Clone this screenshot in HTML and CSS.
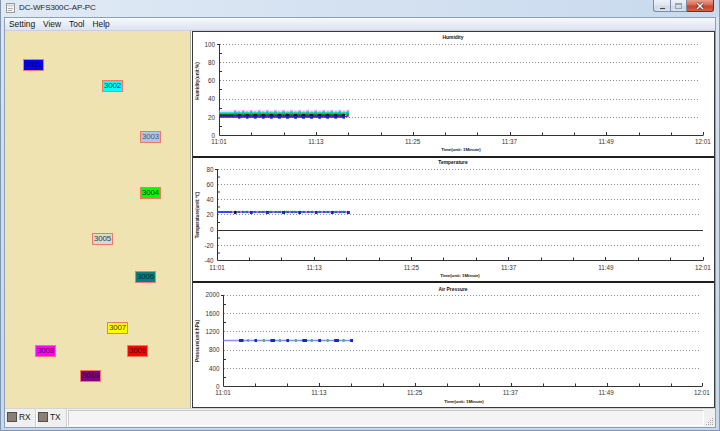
FILE: index.html
```html
<!DOCTYPE html>
<html lang="en">
<head>
<meta charset="utf-8">
<title>DC-WFS300C-AP-PC</title>
<link rel="stylesheet" href="styles.css">
</head>
<body>
<div class="window">
  <div class="titlebar">
    <svg class="app-icon" width="9" height="10" viewBox="0 0 9 10">
      <rect x="0.5" y="0.5" width="8" height="9" fill="#F4F4F4" stroke="#9A9A9A"/>
      <rect x="1.5" y="1.5" width="6" height="2" fill="#C8D4E2"/>
      <path d="M2 5.5h5M2 7.5h4" stroke="#B0B0B0"/>
    </svg>
    <span class="title">DC-WFS300C-AP-PC</span>
    <div class="caption">
      <div class="cbtn min">
        <svg width="15" height="10" viewBox="0 0 15 10"><rect x="4.5" y="6.5" width="6" height="2" fill="#4A4A4A" stroke="#fff" stroke-width="0.6"/></svg>
      </div>
      <div class="cbtn max">
        <svg width="15" height="10" viewBox="0 0 15 10"><rect x="4.5" y="2.5" width="6" height="5" fill="none" stroke="#9AA3AE"/><path d="M4.5 3.5h6" stroke="#9AA3AE"/></svg>
      </div>
      <div class="cbtn close">
        <svg width="24" height="10" viewBox="0 0 24 10"><path d="M9 2L15 8M15 2L9 8" stroke="#5A1E12" stroke-width="2.6"/><path d="M9 2L15 8M15 2L9 8" stroke="#fff" stroke-width="1.5"/></svg>
      </div>
    </div>
  </div>

  <div class="client">
    <div class="menubar">
      <span class="menu-item">Setting</span>
      <span class="menu-item">View</span>
      <span class="menu-item">Tool</span>
      <span class="menu-item">Help</span>
    </div>

    <div class="main">
      <div class="map">
        <div class="badge b1" style="left:18px;top:28px">3001</div>
        <div class="badge b2" style="left:97px;top:49px">3002</div>
        <div class="badge b3" style="left:135px;top:100px">3003</div>
        <div class="badge b4" style="left:135px;top:156px">3004</div>
        <div class="badge b5" style="left:87px;top:202px">3005</div>
        <div class="badge b6" style="left:130px;top:240px">3006</div>
        <div class="badge b7" style="left:102px;top:291px">3007</div>
        <div class="badge b8" style="left:30px;top:314px">3008</div>
        <div class="badge b9" style="left:122px;top:314px">3009</div>
        <div class="badge b10" style="left:75px;top:339px">3010</div>
      </div>
      <div class="splitter"></div>
      <div class="charts">
        <!-- Humidity -->
        <svg class="chart c1" width="521" height="124" viewBox="0 0 521 124">
          <defs>
            <marker id="mkSqBlue" markerUnits="userSpaceOnUse" markerWidth="3" markerHeight="3" refX="1.5" refY="1.5"><rect width="3" height="3" fill="#1428C8"/></marker>
            <marker id="mkSqGreen" markerUnits="userSpaceOnUse" markerWidth="3" markerHeight="3" refX="1.5" refY="1.5"><rect width="3" height="3" fill="#2EAA2E"/></marker>
            <marker id="mkSqBlack" markerUnits="userSpaceOnUse" markerWidth="3" markerHeight="3" refX="1.5" refY="1.5"><rect width="3" height="3" fill="#1A1A1A"/></marker>
            <marker id="mkSqCyan" markerUnits="userSpaceOnUse" markerWidth="3" markerHeight="3" refX="1.5" refY="1.5"><rect width="3" height="3" fill="#00C8D0"/></marker>
            <marker id="mkXPink" markerUnits="userSpaceOnUse" markerWidth="4" markerHeight="4" refX="2" refY="2"><path d="M0.8 0.8L3.2 3.2M3.2 0.8L0.8 3.2" stroke="#FF70FF" stroke-width="0.8"/></marker>
            <marker id="mkXGreen" markerUnits="userSpaceOnUse" markerWidth="4" markerHeight="4" refX="2" refY="2"><path d="M0.8 0.8L3.2 3.2M3.2 0.8L0.8 3.2" stroke="#22C822" stroke-width="0.8"/></marker>
            <marker id="mkXPurple" markerUnits="userSpaceOnUse" markerWidth="4" markerHeight="4" refX="2" refY="2"><path d="M0.8 0.8L3.2 3.2M3.2 0.8L0.8 3.2" stroke="#8A2BE2" stroke-width="0.8"/></marker>
            <marker id="mkXCyan" markerUnits="userSpaceOnUse" markerWidth="4" markerHeight="4" refX="2" refY="2"><path d="M0.8 0.8L3.2 3.2M3.2 0.8L0.8 3.2" stroke="#40E0E0" stroke-width="0.8"/></marker>
            <marker id="mkDotGreen" markerUnits="userSpaceOnUse" markerWidth="3" markerHeight="3" refX="1.5" refY="1.5"><circle cx="1.5" cy="1.5" r="1.4" fill="#3CB371"/></marker>
          </defs>
          <text class="ctitle" x="260" y="7">Humidity</text>
          <path class="grid" d="M27 12.5H507M27 30.5H507M27 48.5H507M27 67.5H507M27 85.5H507"/>
          <path class="axis" d="M26.5 12V103.5H510.5"/>
          <path class="axis" d="M27 21.5h2M27 39.5h2M27 57.5h2M27 76.5h2M27 94.5h2M24 12.5h2.5"/>
          <path class="axis" d="M58.5 103v-2.5M91.5 103v-2.5M123.5 103v-3M155.5 103v-2.5M188.5 103v-2.5M220.5 103v-3M252.5 103v-2.5M284.5 103v-2.5M317.5 103v-3M349.5 103v-2.5M381.5 103v-2.5M413.5 103v-3M446.5 103v-2.5M478.5 103v-2.5M510.5 103v-3"/>
          <g class="ylab">
            <text x="22" y="14.5">100</text>
            <text x="22" y="32.7">80</text>
            <text x="22" y="51">60</text>
            <text x="22" y="69.3">40</text>
            <text x="22" y="87.6">20</text>
            <text x="22" y="106">0</text>
          </g>
          <g class="xlab">
            <text x="26" y="112.3">11:01</text>
            <text x="122.8" y="112.3">11:13</text>
            <text x="219.6" y="112.3">11:25</text>
            <text x="316.4" y="112.3">11:37</text>
            <text x="413.2" y="112.3">11:49</text>
            <text x="510" y="112.3">12:01</text>
          </g>
          <text class="xtitle" x="268" y="118.6">Time(unit: 1Minute)</text>
          <text class="ytitle" transform="translate(5.8,49) rotate(-90)">Humidity(unit:%)</text>
          <g class="series">
            <path d="M26.5 79 H42 h8.07 h8.07 h8.07 h8.07 h8.07 h8.07 h8.07 h8.07 h8.07 h8.07 h8.07 h8.07 h8.07 h8.07" stroke="#FFC0FF" stroke-width="1.2" marker-mid="url(#mkXPink)" marker-end="url(#mkXPink)"/>
            <path d="M26.5 80 H46 h8.07 h8.07 h8.07 h8.07 h8.07 h8.07 h8.07 h8.07 h8.07 h8.07 h8.07 h8.07 h8.07" stroke="#9CF5E8" stroke-width="1.2" marker-mid="url(#mkXCyan)" marker-end="url(#mkXCyan)"/>
            <path d="M26.5 80.8 H42 h8.07 h8.07 h8.07 h8.07 h8.07 h8.07 h8.07 h8.07 h8.07 h8.07 h8.07 h8.07 h8.07 h8.07" stroke="#00D8D8" stroke-width="1.3" marker-mid="url(#mkSqCyan)" marker-end="url(#mkSqCyan)"/>
            <path d="M26.5 81.6 H46 h8.07 h8.07 h8.07 h8.07 h8.07 h8.07 h8.07 h8.07 h8.07 h8.07 h8.07 h8.07 h8.07" stroke="#3CD83C" stroke-width="1.3" marker-mid="url(#mkXGreen)" marker-end="url(#mkXGreen)"/>
            <path d="M26.5 82.4 H42 h8.07 h8.07 h8.07 h8.07 h8.07 h8.07 h8.07 h8.07 h8.07 h8.07 h8.07 h8.07 h8.07 h8.07" stroke="#009A00" stroke-width="1.3" marker-mid="url(#mkSqGreen)" marker-end="url(#mkSqGreen)"/>
            <path d="M26.5 83.4 H46 h8.07 h8.07 h8.07 h8.07 h8.07 h8.07 h8.07 h8.07 h8.07 h8.07 h8.07 h8.07 h8.07" stroke="#2A2A2A" stroke-width="1.1" marker-mid="url(#mkSqBlack)" marker-end="url(#mkSqBlack)"/>
            <path d="M26.5 84.3 H42 h8.07 h8.07 h8.07 h8.07 h8.07 h8.07 h8.07 h8.07 h8.07 h8.07 h8.07 h8.07 h8.07 h8.07" stroke="#8A00B0" stroke-width="1.3" marker-mid="url(#mkXPurple)" marker-end="url(#mkXPurple)"/>
            <path d="M26.5 85.2 H46 h8.07 h8.07 h8.07 h8.07 h8.07 h8.07 h8.07 h8.07 h8.07 h8.07 h8.07 h8.07 h8.07" stroke="#2020FF" stroke-width="1.2" marker-mid="url(#mkSqBlue)" marker-end="url(#mkSqBlue)"/>
          </g>
        </svg>
        <div class="sep"></div>
        <!-- Temperature -->
        <svg class="chart c2" width="521" height="123" viewBox="0 0 521 123">
          <text class="ctitle" x="260" y="5.8">Temperature</text>
          <path class="grid" d="M25 11.5H507M25 26.5H507M25 41.5H507M25 56.5H507M25 87.5H507"/>
          <path class="axis" d="M25 72.5H510"/>
          <path class="axis" d="M24.5 11V102.5H510.5"/>
          <path class="axis" d="M25 19h2M25 34h2M25 49h2M25 64.5h2M25 80h2M25 95h2M22 11.5h2.5"/>
          <path class="axis" d="M56.5 102v-2.5M88.5 102v-2.5M121.5 102v-3M153.5 102v-2.5M186.5 102v-2.5M218.5 102v-3M250.5 102v-2.5M283.5 102v-2.5M315.5 102v-3M348.5 102v-2.5M380.5 102v-2.5M412.5 102v-3M445.5 102v-2.5M477.5 102v-2.5M510.5 102v-3"/>
          <g class="ylab">
            <text x="20.5" y="13.6">80</text>
            <text x="20.5" y="28.8">60</text>
            <text x="20.5" y="44">40</text>
            <text x="20.5" y="59.2">20</text>
            <text x="20.5" y="74.4">0</text>
            <text x="20.5" y="89.6">-20</text>
            <text x="20.5" y="104.8">-40</text>
          </g>
          <g class="xlab">
            <text x="24" y="112.2">11:01</text>
            <text x="121.2" y="112.2">11:13</text>
            <text x="218.4" y="112.2">11:25</text>
            <text x="315.6" y="112.2">11:37</text>
            <text x="412.8" y="112.2">11:49</text>
            <text x="510" y="112.2">12:01</text>
          </g>
          <text class="xtitle" x="267" y="118.7">Time(unit: 1Minute)</text>
          <text class="ytitle" transform="translate(5.8,57) rotate(-90)">Temperature(unit:℃)</text>
          <g class="series">
            <path d="M24.5 54 H40 h8.1 h8.1 h8.1 h8.1 h8.1 h8.1 h8.1 h8.1 h8.1 h8.1 h8.1 h8.1 h8.1 h8.1" stroke="#2E4BFF" stroke-width="2" marker-mid="url(#mkXPink)" marker-end="url(#mkXPink)"/>
            <path d="M44 54 h8.1 h8.1 h8.1 h8.1 h8.1 h8.1 h8.1 h8.1 h8.1 h8.1 h8.1 h8.1 h8.1" stroke="none" marker-start="url(#mkXGreen)" marker-mid="url(#mkXGreen)" marker-end="url(#mkXGreen)"/>
            <path d="M42 54.5 h16.2 h16.2 h16.2 h16.2 h16.2 h16.2 h16.2" stroke="none" marker-start="url(#mkSqBlack)" marker-mid="url(#mkSqBlue)" marker-end="url(#mkSqBlue)"/>
          </g>
        </svg>
        <div class="sep"></div>
        <!-- Air Pressure -->
        <svg class="chart c3" width="521" height="124" viewBox="0 0 521 124">
          <text class="ctitle" x="260" y="7.7">Air Pressure</text>
          <path class="grid" d="M31 12.5H507M31 30.5H507M31 48.5H507M31 67.5H507M31 85.5H507"/>
          <path class="axis" d="M30.5 12V103.5H509.5"/>
          <path class="axis" d="M31 21.5h2M31 39.5h2M31 57.5h2M31 76.5h2M31 94.5h2M28 12.5h2.5"/>
          <path class="axis" d="M62.5 103v-2.5M94.5 103v-2.5M126.5 103v-3M158.5 103v-2.5M190.5 103v-2.5M222.5 103v-3M254.5 103v-2.5M286.5 103v-2.5M318.5 103v-3M350.5 103v-2.5M382.5 103v-2.5M414.5 103v-3M446.5 103v-2.5M478.5 103v-2.5M509.5 103v-3"/>
          <g class="ylab">
            <text x="26.5" y="14.4">2000</text>
            <text x="26.5" y="32.7">1600</text>
            <text x="26.5" y="51">1200</text>
            <text x="26.5" y="69.3">800</text>
            <text x="26.5" y="87.6">400</text>
            <text x="26.5" y="106">0</text>
          </g>
          <g class="xlab">
            <text x="30" y="112.2">11:01</text>
            <text x="125.8" y="112.2">11:13</text>
            <text x="221.6" y="112.2">11:25</text>
            <text x="317.4" y="112.2">11:37</text>
            <text x="413.2" y="112.2">11:49</text>
            <text x="509" y="112.2">12:01</text>
          </g>
          <text class="xtitle" x="271" y="120.4">Time(unit: 1Minute)</text>
          <text class="ytitle" transform="translate(5.8,58) rotate(-90)">Pressure(unit:hPa)</text>
          <g class="series">
            <path d="M30.5 57.5 H160" stroke="#8C8CFF" stroke-width="1.3"/>
            <path d="M47 57.5 h15.95 h15.95 h15.95 h15.95 h15.95 h15.95 h15.95" stroke="none" marker-start="url(#mkSqBlue)" marker-mid="url(#mkSqBlue)" marker-end="url(#mkSqBlue)"/>
            <path d="M55 57.5 h15.95 h15.95 h15.95 h15.95 h15.95 h15.95" stroke="none" marker-start="url(#mkDotGreen)" marker-mid="url(#mkDotGreen)" marker-end="url(#mkDotGreen)"/>
            <path d="M49 57.5 h31.9 h31.9 h31.9" stroke="none" marker-start="url(#mkSqBlue)" marker-mid="url(#mkSqBlue)" marker-end="url(#mkSqBlue)"/>
          </g>
        </svg>
      </div>
    </div>

    <div class="statusbar">
      <div class="sb rx"><span class="led"></span><span class="sb-text">RX</span></div>
      <div class="sb tx"><span class="led"></span><span class="sb-text">TX</span></div>
      <div class="sb fill"></div>
      <svg class="grip" width="9" height="9" viewBox="0 0 9 9">
        <g fill="#A8A8A8">
          <rect x="7" y="1" width="1" height="1"/>
          <rect x="5" y="3" width="1" height="1"/><rect x="7" y="3" width="1" height="1"/>
          <rect x="3" y="5" width="1" height="1"/><rect x="5" y="5" width="1" height="1"/><rect x="7" y="5" width="1" height="1"/>
          <rect x="1" y="7" width="1" height="1"/><rect x="3" y="7" width="1" height="1"/><rect x="5" y="7" width="1" height="1"/><rect x="7" y="7" width="1" height="1"/>
        </g>
      </svg>
    </div>
  </div>
</div>
</body>
</html>
```

FILE: styles.css
```css
* {
  box-sizing: border-box;
}

html,
body {
  margin: 0;
  padding: 0;
}

body {
  width: 720px;
  height: 431px;
  overflow: hidden;
  font-family: "Liberation Sans", Arial, sans-serif;
  background: #C9DAEE;
}

.window {
  width: 720px;
  height: 431px;
  display: flex;
  flex-direction: column;
  background: linear-gradient(180deg, #DDE8F4 0%, #D0DEEE 30%, #C6D8ED 100%);
  box-shadow: inset 0 0 0 1px #8295AE;
}

/* ---------- title bar ---------- */
.titlebar {
  height: 17px;
  flex: none;
  display: flex;
  align-items: flex-start;
  background: linear-gradient(90deg, #E0EAF5 0%, #D5E2F1 45%, #C9DAEE 100%);
  box-shadow: inset 1px 0 0 #8295AE, inset -1px 0 0 #8295AE;
}

.app-icon {
  margin: 3px 0 0 6px;
  flex: none;
}

.title {
  margin-left: 4px;
  font-size: 8px;
  line-height: 16px;
  color: #1E1E1E;
  letter-spacing: -0.1px;
}

.caption {
  margin-left: auto;
  margin-right: 6px;
  display: flex;
}

.cbtn {
  height: 12px;
  display: flex;
  align-items: center;
  justify-content: center;
  border: 1px solid #7D8CA3;
  border-top: none;
}

.cbtn.min {
  width: 17px;
  border-radius: 0 0 0 3px;
  border-right: none;
  background: linear-gradient(180deg, #EEF3F9 0%, #DCE5F0 50%, #CCD8E7 51%, #D9E3EF 100%);
}

.cbtn.max {
  width: 17px;
  background: linear-gradient(180deg, #EEF3F9 0%, #DCE5F0 50%, #CCD8E7 51%, #D9E3EF 100%);
}

.cbtn.close {
  width: 27px;
  border-radius: 0 0 3px 0;
  border-color: #7A2A1E;
  border-left: none;
  background: linear-gradient(180deg, #E8A08E 0%, #D8694F 45%, #C7432B 55%, #D65F42 100%);
}

/* ---------- client ---------- */
.client {
  flex: 1;
  margin: 0 4px 3px;
  border: 1px solid #8DA0BA;
  display: flex;
  flex-direction: column;
  background: #F0F0F0;
}

.menubar {
  height: 13px;
  flex: none;
  display: flex;
  align-items: center;
  gap: 8px;
  padding-left: 4px;
  background: linear-gradient(180deg, #F7F9FD 0%, #E9EDF7 50%, #DCE3F1 100%);
  border-bottom: 1px solid #C9D1E1;
}

.menu-item {
  font-size: 8.4px;
  color: #141414;
  line-height: 12px;
}

.main {
  height: 377px;
  flex: none;
  display: flex;
}

/* ---------- map ---------- */
.map {
  width: 185px;
  position: relative;
  background: #EFE3B1;
}

.badge {
  position: absolute;
  width: 21px;
  height: 12px;
  border: 1px solid #EE7A66;
  font-size: 8px;
  line-height: 10px;
  text-align: center;
  color: #202020;
  letter-spacing: -0.2px;
}

.b1 { background: #0000FF; color: #0A0A40; }
.b2 { background: #00FFFF; color: #104040; }
.b3 { background: #B0C4DE; color: #4A5A78; }
.b4 { background: #00FF00; color: #103010; }
.b5 { background: #D3DAD2; color: #3C3C3C; }
.b6 { background: #008080; color: #0C2A2A; }
.b7 { background: #FFFF00; color: #3A3A10; }
.b8 { background: #FF00FF; color: #501050; }
.b9 { background: #FF0000; color: #400A0A; }
.b10 { background: #800080; color: #1E0A1E; }

.splitter {
  width: 2px;
  border-left: 1px solid #ABABAB;
  background: #FFFFFF;
}

/* ---------- charts ---------- */
.charts {
  width: 523px;
  border: 1px solid #3A3A3A;
  background: #FFFFFF;
  display: flex;
  flex-direction: column;
}

.chart {
  display: block;
  flex: none;
  font-family: "Liberation Sans", Arial, sans-serif;
}

.sep {
  height: 2px;
  flex: none;
  background: #1E1E1E;
}

.grid {
  fill: none;
  stroke: #8C8C8C;
  stroke-width: 1;
  stroke-dasharray: 1 2;
}

.axis {
  fill: none;
  stroke: #333333;
  stroke-width: 1;
}

.ylab text {
  font-size: 6.3px;
  fill: #333333;
  text-anchor: end;
}

.xlab text {
  font-size: 6.3px;
  fill: #333333;
  text-anchor: middle;
}

.ctitle {
  font-size: 4.9px;
  font-weight: bold;
  fill: #111111;
  text-anchor: middle;
}

.xtitle {
  font-size: 4.3px;
  font-weight: bold;
  fill: #111111;
  text-anchor: middle;
}

.ytitle {
  font-size: 4.7px;
  font-weight: bold;
  fill: #222222;
  text-anchor: middle;
}

.series path {
  fill: none;
}

/* ---------- status bar ---------- */
.statusbar {
  height: 19px;
  flex: none;
  display: flex;
  align-items: flex-start;
  background: #F0F0F0;
  border-top: 1px solid #D4D4D4;
}

.sb {
  height: 100%;
  display: flex;
  align-items: flex-start;
  padding: 3px 0 0 2px;
  border-right: 1px solid #CFCFCF;
  box-shadow: 1px 0 0 #FFFFFF;
}

.sb.rx {
  width: 31px;
}

.sb.tx {
  width: 31px;
}

.sb.fill {
  flex: 1;
  height: 16px;
  margin: 1px 1px 0 1px;
  padding: 0;
  border: 1px solid;
  border-color: #C8C8C8 #FFFFFF #FFFFFF #C8C8C8;
  box-shadow: none;
  background: #F4F4F4;
}

.led {
  width: 10px;
  height: 10px;
  background: #8A7E75;
  border: 1px solid #505050;
  margin-right: 2px;
}

.sb-text {
  font-size: 8.4px;
  line-height: 10px;
  color: #222222;
}

.grip {
  align-self: flex-end;
  margin: 0 1px 1px 0;
  flex: none;
}
```
